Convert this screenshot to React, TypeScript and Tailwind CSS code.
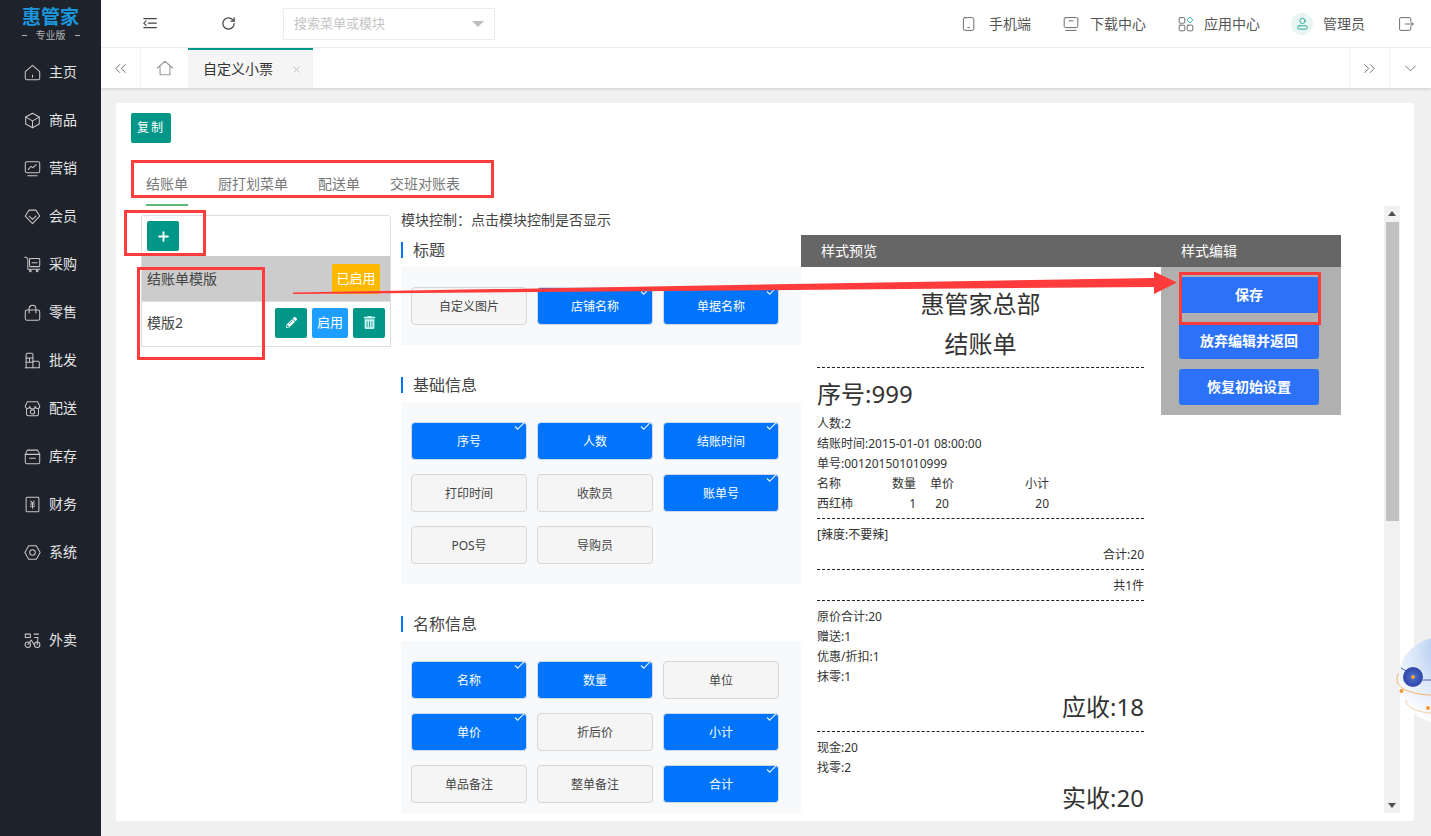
import { ChevronDown, ChevronsLeft, ChevronsRight, Plus, RotateCw, X } from "lucide-react"
import { FaPencilAlt, FaTrashAlt } from "react-icons/fa"
import type { ReactNode } from "react"

function Ico({ children, className = "size-5" }: { children: ReactNode; className?: string }) {
  return (
    <svg viewBox="0 0 20 20" fill="none" stroke="currentColor" strokeWidth="1.2" strokeLinejoin="round" strokeLinecap="round" className={className}>
      {children}
    </svg>
  )
}

const navItems: { label: string; icon: ReactNode }[] = [
  { label: "主页", icon: <><path d="M1.500 9 10 1.500 18.500 9v7.500a2 2 0 0 1-2 2h-13a2 2 0 0 1-2-2z" /><path d="M10 13v2.500" /></> },
  { label: "商品", icon: <><path d="M10 1.500l8 4.300v8.400l-8 4.300-8-4.300V5.800z" /><path d="M2.200 6 10 10.500 17.800 6M10 10.500v8" /></> },
  { label: "营销", icon: <><rect x="1.500" y="2" width="17" height="13" rx="2" /><path d="M5 11l3.500-3.500 2 1.500 4-3.500M4.500 18.500h11" /></> },
  { label: "会员", icon: <><path d="M6 2.500h8l4.500 7L10 18.500 1.500 9.500z" /><path d="M6 9.500l4 4 4-4" /></> },
  { label: "采购", icon: <><path d="M1 1.500h2l1.500 2v12h14" /><rect x="6.500" y="3" width="12" height="9.500" rx="1" /><path d="M9.500 8h6" /><circle cx="7.500" cy="17.500" r="1" /><circle cx="15.500" cy="17.500" r="1" /></> },
  { label: "零售", icon: <><rect x="1.500" y="7" width="17" height="12" rx="2" /><path d="M6 10.500V5.500a4 4 0 0 1 8 0v5" /></> },
  { label: "批发", icon: <><path d="M2.500 18.500V3A1.500 1.500 0 0 1 4 1.500h5A1.500 1.500 0 0 1 10.500 3v15.500" /><path d="M10.500 11h6a1.500 1.500 0 0 1 1.500 1.500v6M1.500 18.500h17M2.500 7h8M2.500 12h8M6.500 7v5" /></> },
  { label: "配送", icon: <><path d="M4 2h12l2.500 5a2.700 2.700 0 0 1-5.400.5 3.100 3.100 0 0 1-6.200 0A2.700 2.700 0 0 1 1.500 7z" /><path d="M3 10.500V16.500a2 2 0 0 0 2 2h10a2 2 0 0 0 2-2v-6" /><circle cx="10" cy="14" r="2.500" /></> },
  { label: "库存", icon: <><path d="M1.500 7.500 4 2.500h12l2.500 5v9a2 2 0 0 1-2 2h-13a2 2 0 0 1-2-2z" /><path d="M1.500 7.500h17M6.500 12h7" /></> },
  { label: "财务", icon: <><rect x="2.500" y="1.500" width="15" height="17" rx="1" /><path d="M8 6l2 2.500L12 6M7.500 9.500h5M7.500 12h5M10 8.500v6" /></> },
  { label: "系统", icon: <><path d="M5.500 2h9L19 10l-4.500 8h-9L1 10z" /><circle cx="10" cy="10" r="3.300" /></> },
]

function NavItem({ label, icon }: { label: string; icon: ReactNode }) {
  return (
    <div className="flex h-12 items-center gap-[8px] pl-6 text-[#e4e4e4]">
      <span className="text-[#c9c9c9]"><Ico className="size-[17px]">{icon}</Ico></span>
      <span className="text-sm">{label}</span>
    </div>
  )
}

function Sidebar() {
  return (
    <aside className="flex w-[101px] shrink-0 flex-col bg-[#1e222b]">
      <div className="flex h-12 flex-col items-center font-['Liberation_Sans','Noto_Sans_CJK_SC',sans-serif]">
        <div className="mt-[6px] text-[19px] leading-[23px] font-bold text-[#1b96dc]">惠管家</div>
        <div className="mt-[1px] flex items-center gap-[9px] text-[10px] leading-[11px] text-[#b5b5b5]">
          <span className="h-px w-[5px] bg-[#b5b5b5]" />
          专业版
          <span className="h-px w-[5px] bg-[#b5b5b5]" />
        </div>
      </div>
      {navItems.map((n) => (
        <NavItem key={n.label} {...n} />
      ))}
      <div className="mt-10">
        <NavItem
          label="外卖"
          icon={<><circle cx="4.500" cy="15" r="3.200" /><circle cx="15.500" cy="15" r="3.200" /><path d="M1.500 2.500h6v4h-6zM12 2.500h5M12.500 6.500h4L15.500 15M4.500 15 8.500 9.500 12 15" /></>}
        />
      </div>
    </aside>
  )
}

function TopLink({ icon, label, gap }: { icon: ReactNode; label: string; gap: string }) {
  return (
    <div className={`flex items-center text-sm text-[#555] ${gap}`}>
      {icon}
      <span>{label}</span>
    </div>
  )
}

function TopBar() {
  return (
    <header className="flex h-12 shrink-0 items-center border-b border-[#f2f2f2] bg-white">
      <div className="ml-[41px] text-[#444]">
        <Ico className="size-[18px]"><path d="M2 4h14M7 9h9M2 14h14M4.500 6.500 2 9l2.500 2.500" /></Ico>
      </div>
      <RotateCw className="ml-[61px] size-[15px] text-[#444]" strokeWidth={2} />
      <div className="ml-[47px] flex h-8 w-[212px] items-center justify-between border border-[#ececec] pr-[10px] pl-[10px] text-[13px] text-[#c4c4c4]">
        搜索菜单或模块
        <span className="size-0 border-x-[6px] border-t-[6px] border-x-transparent border-t-[#bdbdbd]" />
      </div>
      <div className="ml-auto flex items-center pr-[17px]">
        <TopLink gap="gap-[12px]" label="手机端" icon={<Ico className="size-4 text-[#666]"><rect x="3" y="2" width="13" height="16" rx="2" /><path d="M8.500 14.500h2" /></Ico>} />
        <div className="ml-[32px]">
          <TopLink gap="gap-[11px]" label="下载中心" icon={<Ico className="size-4 text-[#666]"><rect x="1.500" y="2" width="17" height="12.500" rx="1.500" /><path d="M7.500 6h5M3.500 18h13" /></Ico>} />
        </div>
        <div className="ml-[32px]">
          <TopLink gap="gap-[10px]" label="应用中心" icon={
            <Ico className="size-4 text-[#666]">
              <rect x="1.500" y="2" width="7" height="7" rx="1.200" />
              <rect x="1.500" y="11.500" width="7" height="7" rx="1.200" />
              <rect x="11.500" y="11.500" width="7" height="7" rx="1.200" />
              <path d="M15 1.500l3.500 3.700L15 8.800l-3.500-3.600z" stroke="#2bb5a3" />
            </Ico>
          } />
        </div>
        <div className="ml-[31px] flex items-center gap-[10px] text-sm text-[#555]">
          <span className="flex size-[22px] items-center justify-center rounded-full bg-[#e8f5f3] text-[#18a58f]">
            <Ico className="size-[15px]"><circle cx="10" cy="6.500" r="3.500" /><rect x="3.500" y="13" width="13" height="4.500" rx="2.200" /></Ico>
          </span>
          管理员
        </div>
        <div className="ml-[33px] text-[#666]">
          <Ico className="size-4"><path d="M16 6V3.500A1.500 1.500 0 0 0 14.500 2h-11A1.500 1.500 0 0 0 2 3.500v13A1.500 1.500 0 0 0 3.500 18h11a1.500 1.500 0 0 0 1.500-1.500V14M9 10h10M16 7l3 3-3 3" /></Ico>
        </div>
      </div>
    </header>
  )
}

function TabBar() {
  return (
    <div className="z-10 flex h-[40px] shrink-0 items-stretch bg-white shadow-[0_1px_3px_rgba(0,0,0,0.15)]">
      <div className="flex w-10 items-center justify-center border-r border-[#f2f2f2] text-[#666]">
        <ChevronsLeft className="size-[19px]" strokeWidth={1.2} />
      </div>
      <div className="flex w-[47px] items-center justify-center text-[#999]">
        <Ico className="size-[18px]"><path d="M1.500 10 10 2.500 18.500 10M4.500 8.500v9h11v-9" /></Ico>
      </div>
      <div className="flex w-[125px] items-center gap-[18px] border-t-2 border-[#009688] bg-[#f5f5f5] pl-[15px] text-sm text-[#333]">
        自定义小票
        <X className="size-[11px] text-[#bbb]" />
      </div>
      <div className="ml-auto flex w-10 items-center justify-center border-l border-[#f2f2f2] text-[#666]">
        <ChevronsRight className="size-[19px]" strokeWidth={1.2} />
      </div>
      <div className="flex w-[42px] items-center justify-center border-l border-[#f2f2f2] text-[#666]">
        <ChevronDown className="size-[19px]" strokeWidth={1.1} />
      </div>
    </div>
  )
}

function TemplateList() {
  return (
    <div className="mt-[9px] h-[132px] w-[250px] shrink-0 rounded-t-[3px] border border-[#dedede] text-sm text-[#444]">
      <div className="h-10 pt-[5px] pl-[5px]">
        <button className="flex h-[30px] w-8 items-center justify-center rounded-[2px] bg-[#009688] text-white">
          <Plus className="size-[15px]" strokeWidth={3} />
        </button>
      </div>
      <div className="flex h-[45px] items-center justify-between bg-[#cccccc] pr-[10px] pl-[5px]">
        结账单模版
        <button className="h-[30px] w-12 rounded-[2px] bg-[#ffb800] text-[13px] text-white">已启用</button>
      </div>
      <div className="flex h-[45px] items-center border-t border-[#dedede] pr-[5px] pb-[3px] pl-[5px]">
        模版2
        <div className="ml-auto flex gap-[5px] text-[13px] text-white">
          <button className="flex h-[30px] w-8 items-center justify-center rounded-[2px] bg-[#009688]"><FaPencilAlt className="size-[11px]" /></button>
          <button className="h-[30px] w-9 rounded-[2px] bg-[#1e9fff]">启用</button>
          <button className="flex h-[30px] w-8 items-center justify-center rounded-[2px] bg-[#009688]"><FaTrashAlt className="size-[13px] text-[#c8f5f0]" /></button>
        </div>
      </div>
    </div>
  )
}

function ModuleButton({ label, on }: { label: string; on?: boolean }) {
  return (
    <div
      className={
        on
          ? "relative flex h-[38px] items-center justify-center rounded border border-[#cfd8e6] bg-[#0075fb] pt-px text-xs text-white"
          : "flex h-[38px] items-center justify-center rounded border border-[#d6d6d6] bg-[#f5f5f5] pt-px text-xs text-[#444]"
      }
    >
      {label}
      {on && (
        <svg viewBox="0 0 12 10" fill="none" stroke="#e6f0ff" strokeWidth="1.300" className="absolute -top-px right-[1px] h-[9px] w-[11px]">
          <path d="M1 5l3 3 7-7" />
        </svg>
      )}
    </div>
  )
}

function ModuleGroup({ title, items, className = "" }: { title: string; items: [string, boolean?][]; className?: string }) {
  return (
    <section className={className}>
      <h3 className="mb-[9px] border-l-2 border-[#0075fb] pl-[10px] text-base leading-4 text-[#444]">{title}</h3>
      <div className="grid grid-cols-[116px_116px_116px] gap-x-[10px] gap-y-[14px] bg-[#f8f9fb] px-[10px] py-5">
        {items.map(([label, on]) => (
          <ModuleButton key={label} label={label} on={on} />
        ))}
      </div>
    </section>
  )
}

function Dash({ className = "my-[5px]" }: { className?: string }) {
  return <div className={`border-t border-dashed border-[#222] ${className}`} />
}

function Line({ children, right }: { children: ReactNode; right?: boolean }) {
  return <div className={right ? "h-5 pt-px text-right text-xs leading-5" : "h-5 pt-px text-xs leading-5"}>{children}</div>
}

function Big({ children, right }: { children: ReactNode; right?: boolean }) {
  return <div className={right ? "h-10 pt-px text-right text-2xl leading-10" : "h-10 pt-px text-2xl leading-10"}>{children}</div>
}

function ItemRow({ cells }: { cells: string[] }) {
  return (
    <div className="flex h-5 pt-px text-xs leading-5">
      <span className="w-[74px]">{cells[0]}</span>
      <span className="w-[25px] text-right">{cells[1]}</span>
      <span className="ml-[14px] w-6 text-center">{cells[2]}</span>
      <span className="w-[95px] text-right">{cells[3]}</span>
    </div>
  )
}

function Receipt() {
  return (
    <div className="w-[360px] shrink-0 pt-[17px] pr-[17px] pl-4 text-[#333]">
      <div className="h-10 text-center text-2xl leading-10">惠管家总部</div>
      <div className="h-10 text-center text-2xl leading-10">结账单</div>
      <Dash className="mt-[3px] mb-[5px]" />
      <Big>序号:999</Big>
      <Line>人数:2</Line>
      <Line>结账时间:2015-01-01 08:00:00</Line>
      <Line>单号:001201501010999</Line>
      <ItemRow cells={["名称", "数量", "单价", "小计"]} />
      <ItemRow cells={["西红柿", "1", "20", "20"]} />
      <Dash />
      <Line>[辣度:不要辣]</Line>
      <Line right>合计:20</Line>
      <Dash />
      <Line right>共1件</Line>
      <Dash />
      <Line>原价合计:20</Line>
      <Line>赠送:1</Line>
      <Line>优惠/折扣:1</Line>
      <Line>抹零:1</Line>
      <Big right>应收:18</Big>
      <Dash />
      <Line>现金:20</Line>
      <Line>找零:2</Line>
      <Big right>实收:20</Big>
    </div>
  )
}

function StylePanel() {
  return (
    <div className="mt-[15px] w-[540px] shrink-0">
      <div className="flex h-8 items-center bg-[#666666] text-sm text-white">
        <span className="w-[360px] pl-5">样式预览</span>
        <span className="pl-5">样式编辑</span>
      </div>
      <div className="flex items-start">
        <Receipt />
        <div className="flex h-[148px] w-[180px] flex-col gap-[10px] bg-[#b0b0b0] pt-[10px] pr-[22px] pl-[18px] text-sm font-bold text-white">
          <button className="h-9 rounded-[3px] bg-[#2b72f8]">保存</button>
          <button className="h-9 rounded-[3px] bg-[#2b72f8]">放弃编辑并返回</button>
          <button className="h-9 rounded-[3px] bg-[#2b72f8]">恢复初始设置</button>
        </div>
      </div>
    </div>
  )
}

function Scrollbar() {
  return (
    <div className="flex w-4 shrink-0 flex-col items-center bg-[#f1f1f1]">
      <div className="mt-[5px] h-[5px] w-0 border-x-[4px] border-b-[5px] border-x-transparent border-b-[#505050]" />
      <div className="mt-[6px] h-[299px] w-[13px] bg-[#c1c1c1]" />
      <div className="mt-auto mb-[5px] h-[5px] w-0 border-x-[4px] border-t-[5px] border-x-transparent border-t-[#505050]" />
    </div>
  )
}

function Content() {
  return (
    <div className="flex h-[718px] flex-col overflow-hidden rounded-[2px] bg-white">
      <div className="pt-[10px] pl-[15px]">
        <button className="h-[30px] w-10 rounded-[2px] bg-[#009688] text-xs tracking-[2px] text-white">复制</button>
      </div>
      <div className="flex h-[63px] shrink-0 items-end gap-[30px] pl-[30px] text-sm leading-5 text-[#777]">
        <span className="border-b-2 border-[#5fb878] pb-[10px]">结账单</span>
        <span className="pb-[12px]">厨打划菜单</span>
        <span className="pb-[12px]">配送单</span>
        <span className="pb-[12px]">交班对账表</span>
      </div>
      <div className="flex h-[607px] shrink-0 pr-[14px] pl-[25px]">
        <TemplateList />
        <div className="ml-[10px] flex min-w-0 flex-1 overflow-hidden">
          <div className="w-[400px] shrink-0 pt-[6px]">
            <div className="h-[16px] text-sm leading-4 text-[#444]">模块控制：点击模块控制是否显示</div>
            <ModuleGroup
              className="mt-[14px]"
              title="标题"
              items={[["自定义图片"], ["店铺名称", true], ["单据名称", true]]}
            />
            <ModuleGroup
              className="mt-8"
              title="基础信息"
              items={[["序号", true], ["人数", true], ["结账时间", true], ["打印时间"], ["收款员"], ["账单号", true], ["POS号"], ["导购员"]]}
            />
            <ModuleGroup
              className="mt-8"
              title="名称信息"
              items={[["名称", true], ["数量", true], ["单位"], ["单价", true], ["折后价"], ["小计", true], ["单品备注"], ["整单备注"], ["合计", true]]}
            />
          </div>
          <div className="pt-[14px]">
            <StylePanel />
          </div>
        </div>
        <Scrollbar />
      </div>
    </div>
  )
}

function Annotations() {
  return (
    <>
      <div className="absolute top-[160px] left-[131px] h-[38px] w-[363px] border-[3px] border-[#ff3b3b]" />
      <div className="absolute top-[210px] left-[124px] h-[46px] w-[82px] border-[3px] border-[#ff3b3b]" />
      <div className="absolute top-[267px] left-[137px] h-[93px] w-[128px] border-[3px] border-[#ff3b3b]" />
      <div className="absolute top-[272px] left-[1179px] h-[53px] w-[142px] border-[3px] border-[#ff3b3b]" />
      <svg className="pointer-events-none absolute top-[265px] left-[290px] h-[35px] w-[895px]" viewBox="290 265 895 35">
        <path d="M293 292.500 1154 278 1154 271.500 1177 282.500 1154 294 1154 287 293 294z" fill="#ff3b3b" />
      </svg>
    </>
  )
}

function Robot() {
  return (
    <svg className="pointer-events-none absolute top-[630px] left-[1385px] h-[110px] w-[46px]" viewBox="0 0 46 110">
      <defs>
        <radialGradient id="ball" cx="0.700" cy="0.150" r="0.900">
          <stop offset="0" stopColor="#8fb0e8" />
          <stop offset="0.550" stopColor="#d9e6f8" />
          <stop offset="1" stopColor="#ffffff" />
        </radialGradient>
        <radialGradient id="eye" cx="0.500" cy="0.500" r="0.500">
          <stop offset="0" stopColor="#4f70cc" />
          <stop offset="1" stopColor="#2f46a8" />
        </radialGradient>
      </defs>
      <circle cx="56" cy="50" r="43" fill="url(#ball)" />
      <path d="M16 38l12 7M38 50h8" stroke="#4a5aa8" strokeWidth="1" />
      <circle cx="28" cy="47" r="10" fill="url(#eye)" />
      <circle cx="28" cy="47" r="2" fill="#f5a33a" />
      <path d="M14 43c-5 8 0 16 12 19 6 2 14 3 20 3" fill="none" stroke="#f5b266" strokeWidth="1" />
      <path d="M21 70c0 7 10 12 25 13" fill="none" stroke="#f8cfa0" strokeWidth="1" />
      <circle cx="16.500" cy="61" r="2" fill="#f59a2e" />
      <circle cx="43" cy="78" r="2" fill="#f59a2e" />
    </svg>
  )
}

export default function App() {
  return (
    <div className="relative flex h-[836px] w-[1431px] overflow-hidden bg-[#f0f0f0] font-['Noto_Sans','Noto_Sans_CJK_SC',sans-serif]">
      <Sidebar />
      <div className="flex min-w-0 flex-1 flex-col">
        <TopBar />
        <TabBar />
        <main className="flex-1 pt-[15px] pr-[17px] pl-[15px]">
          <Content />
        </main>
      </div>
      <Annotations />
      <Robot />
    </div>
  )
}
